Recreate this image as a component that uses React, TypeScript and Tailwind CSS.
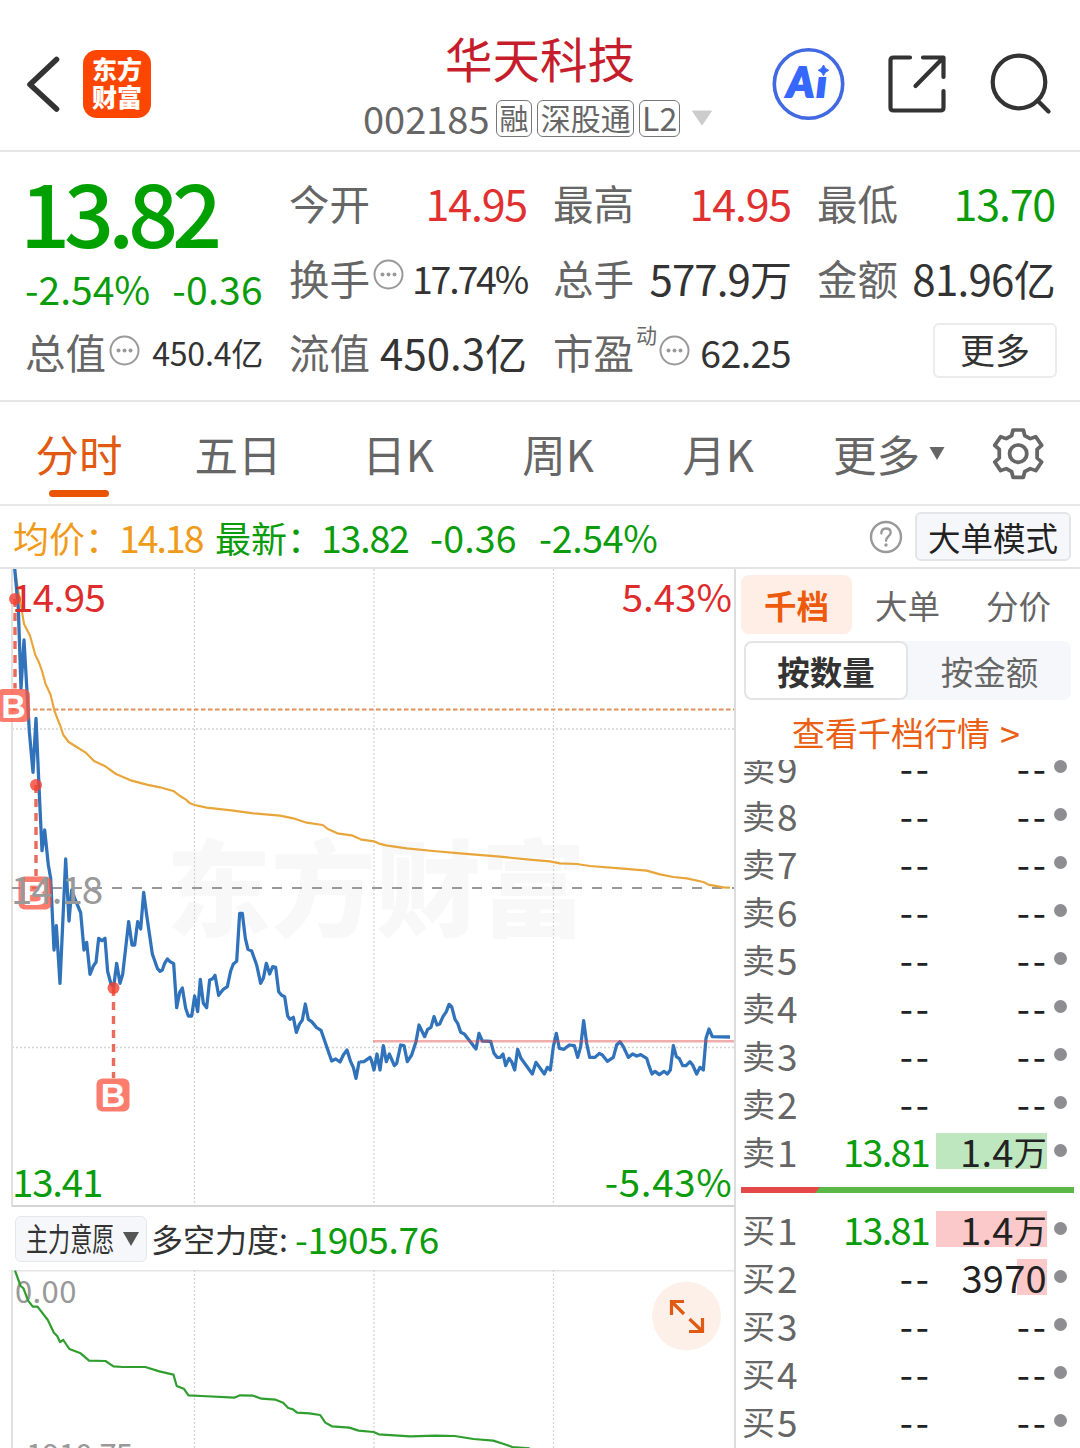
import React from 'react';

const PRICE_OPEN =
    '44,-815 55,-695 63,-455 72,-600 88,-325 99,-203 108,-365 117,-160 126,32 134,-30 145,75 152,115 162,330 169,257 180,430 197,57 207,243 215,150 226,180 242,218 252,330 260,307 270,403 280,378 288,367 296,295 306,302 315,295 323,395 333,432 341,440 350,370 360,430 368,403 386,245 396,315 404,315 413,245 422,267 431,157 440,225 457,342 472,385 480,394 487,390 494,370 502,357 510,365 521,371 530,503 539,457 547,444 557,505 565,528 575,528 584,468 593,515 601,418 610,490 620,503 629,420 638,416 645,406 656,466 670,448 682,440 692,393 700,372 710,364 719,220 727,220 736,295 744,328 755,333 770,375 782,430 790,415 799,370 809,402 818,380 827,382 836,455 845,466 854,470 863,528 870,538 880,532 889,577 898,553 907,540 916,492 925,538 935,545 950,563 963,571 995,663 1007,657 1020,666 1030,645 1041,630 1052,665 1060,682 1068,715 1077,667 1080,666';

const PRICE_CLOSE =
    '0,846 12,845 30,832 34,840 42,870 51,822 60,870 70,797 79,845 88,822 103,857 110,850 122,795 132,797 142,845 155,825 168,785 177,735 194,770 203,748 213,742 222,710 231,735 239,732 249,710 259,695 267,673 275,680 285,718 293,730 302,757 313,762 348,807 357,760 367,783 392,784 402,820 411,832 421,832 429,822 437,857 447,835 455,845 464,870 473,808 483,835 517,882 528,847 553,882 562,862 571,870 580,800 589,760 598,805 612,808 628,795 643,797 653,832 662,800 671,722 680,790 689,832 705,832 718,820 727,825 742,844 760,832 770,795 780,785 790,800 805,832 818,822 830,828 842,824 860,835 868,860 876,882 885,874 898,884 912,874 922,882 931,870 940,797 949,830 958,836 968,857 978,857 990,845 998,855 1010,882 1020,862 1030,870 1038,775 1047,747 1057,770 1110,771';

const AVG_OPEN =
    '44,10 55,80 66,140 72,177 90,212 106,270 116,290 126,318 136,355 152,390 164,440 180,480 190,510 206,531 230,546 256,562 282,588 316,604 348,627 395,647 440,659 480,667 522,679 540,693 558,704 570,715 584,720 620,728 700,737 760,745 840,752 880,760 920,773 968,780 985,793 1012,805 1055,811 1080,822';

const AVG_CLOSE =
    '0,178 42,184 55,190 78,196 140,205 220,213 300,220 420,230 500,238 570,244 600,250 650,252 690,258 780,265 860,272 900,283 940,291 980,295 1030,306 1045,314 1090,322 1110,323';

const FORCE =
    '32,212 44,258 50,265 60,302 70,320 80,320 102,360 115,398 122,408 128,426 135,420 148,447 172,460 190,482 225,483 242,499 262,501 310,501 340,514 370,524 377,558 392,566 402,586 430,588 500,593 512,586 540,587 558,596 588,599 604,608 615,624 625,628 634,638 660,640 683,645 694,668 708,679 745,683 765,692 797,696 808,703 875,709 930,707 970,708 1010,717 1052,722 1075,732 1093,741 1130,745';

const sells = [
    { level: 9 },
    { level: 8 },
    { level: 7 },
    { level: 6 },
    { level: 5 },
    { level: 4 },
    { level: 3 },
    { level: 2 },
    { level: 1, price: '13.81', volume: '1.4万', bar: 111 }
];

const buys = [
    { level: 1, price: '13.81', volume: '1.4万', bar: 111 },
    { level: 2, volume: '3970', bar: 30 },
    { level: 3 },
    { level: 4 },
    { level: 5 }
];

type Level = { level: number; price?: string; volume?: string; bar?: number };

const MoreDots: React.FC = () => (
    <svg width="31" height="31" viewBox="0 0 31 31" className="shrink-0">
        <circle cx="15.5" cy="15.5" r="14" fill="none" stroke="#999" strokeWidth="2" />
        <circle cx="9.5" cy="15.5" r="2" fill="#999" />
        <circle cx="15.5" cy="15.5" r="2" fill="#999" />
        <circle cx="21.5" cy="15.5" r="2" fill="#999" />
    </svg>
);

const LevelRow: React.FC<{ side: string; row: Level; barClass: string }> = ({ side, row, barClass }) => (
    <div className="relative flex h-12 items-center pl-1.5">
        <span className="flex w-[62px] items-center whitespace-nowrap text-[33px] leading-none text-[#666]">
            <span>{side}</span>
            <span className="ml-0.5 text-[37px] leading-none">{row.level}</span>
        </span>
        {row.price ? (
            <span className="w-[125px] text-right text-[38px] leading-none tracking-[-1.8px] text-[#0a9c0a]">{row.price}</span>
        ) : (
            <span className="w-[128px] text-right text-[38px] leading-none tracking-[3px] text-[#222]">--</span>
        )}
        {row.bar && (
            <div className={`absolute right-[33px] top-1.5 h-9 ${barClass}`} style={{ width: row.bar }} />
        )}
        {row.volume ? (
            <span className="relative ml-auto mr-[33px] flex items-center text-[38px] leading-none tracking-[0.3px] text-[#222]">
                {row.volume.replace('万', '')}
                {row.volume.includes('万') && <span className="text-[33px] leading-none">万</span>}
            </span>
        ) : (
            <span className="ml-auto mr-[31px] text-[38px] leading-none tracking-[3px] text-[#222]">--</span>
        )}
        <span className="absolute right-[13px] top-[17px] h-[13px] w-[13px] rounded-full bg-[#8e8d92]" />
    </div>
);

const Marker: React.FC<{ x: number; y: number; boxY: number; cx?: number }> = ({ x, y, boxY, cx = x }) => (
    <g>
        <line x1={x} x2={x} y1={y} y2={boxY - 17} stroke="#ea6a5c" strokeWidth="3.4" strokeDasharray="8 6" />
        <circle cx={x} cy={y} r="6" fill="#f4402f" fillOpacity="0.8" />
        <rect x={cx - 16.5} y={boxY - 16.5} width="33" height="33" rx="6" fill="#fb5340" fillOpacity="0.76" />
        <text x={cx} y={boxY + 12} textAnchor="middle" fill="#fff" fontFamily="Liberation Sans, sans-serif" fontWeight="700" fontSize="34">
            B
        </text>
    </g>
);

const Header: React.FC = () => (
    <header className="flex h-[152px] border-b-2 border-[#e6e6e6]">
        <div className="flex w-[363px] items-start pl-[26px] pt-[50px]">
            <svg width="34" height="68" viewBox="0 0 34 68">
                <path d="M30.500 9.500 4 34.500l26.500 24.500" fill="none" stroke="#333" strokeWidth="5.600" strokeLinecap="round" strokeLinejoin="round" />
            </svg>
            <div className="ml-[23px] flex h-[68px] w-[68px] flex-col items-center justify-center rounded-[14px] bg-[#ff4600] pb-1 text-[25px] font-black leading-[28px] text-white">
                <span>东方</span>
                <span>财富</span>
            </div>
        </div>
        <div className="flex w-[350px] flex-col items-center">
            <h1 className="ml-1 mt-[34px] text-[47.5px] font-normal leading-[48px] text-[#c51d2b]">华天科技</h1>
            <div className="mt-[17px] flex h-[38px] w-full items-center text-[#666]">
                <span className="w-[133px] whitespace-nowrap text-[38px] leading-none">002185</span>
                <span className="flex h-[37px] w-[37px] items-center justify-center rounded-md border border-[#777] pb-0.5 text-[29px] leading-none">融</span>
                <span className="ml-[5px] flex h-[37px] w-[97px] items-center justify-center rounded-md border border-[#777] pb-0.5 text-[30px] leading-none">深股通</span>
                <span className="ml-[5px] flex h-[37px] w-[41px] items-center justify-center rounded-md border border-[#777] pb-0.5 text-[32px] leading-none">L2</span>
                <svg width="22" height="16" viewBox="0 0 22 16" className="ml-[11px]">
                    <path d="M1.5 1h19L11 15z" fill="#ccc" stroke="#ccc" strokeLinejoin="round" />
                </svg>
            </div>
        </div>
        <div className="flex flex-1 items-start pl-[59px] pt-[48px]">
            <svg width="73" height="73" viewBox="0 0 73 73">
                <text x="15" y="49" fill="#3668ff" stroke="#3668ff" strokeWidth="2" fontFamily="Lato, sans-serif" fontWeight="900" fontStyle="italic" fontSize="41" letterSpacing="2.500">
                    Ai
                </text>
                <path d="M44 12h15v17H44z" fill="#fff" />
                <circle cx="36.5" cy="36" r="34.2" fill="none" stroke="#4169e1" strokeWidth="3.6" />
                <path d="M51.500 17q1.400 4.200 5.300 5.300-3.900 1.100-5.300 5.300-1.400-4.200-5.300-5.300 3.900-1.100 5.300-5.300z" fill="#3668ff" stroke="#3668ff" />
            </svg>
            <svg width="60" height="60" viewBox="0 0 60 60" className="ml-[42px] mt-[7px]" fill="none" stroke="#333" strokeWidth="4.200" strokeLinecap="round" strokeLinejoin="round">
                <path d="M23 2.500H6.500q-3 0-3 3v47q0 3 3 3h47q3 0 3-3V36" />
                <path d="M36 2.500h20.500V22M28.500 31 55.500 3.500" />
            </svg>
            <svg width="64" height="64" viewBox="0 0 64 64" className="ml-[43px] mt-[5px]" fill="none" stroke="#333" strokeWidth="4.200" strokeLinecap="round">
                <circle cx="29" cy="29" r="26.300" />
                <path d="m47.500 47.500 11 11" />
            </svg>
        </div>
    </header>
);

const Quote: React.FC = () => (
    <section className="flex h-[250px] justify-between border-b-2 border-[#e6e6e6] pl-[25px] pr-[25px] text-[40.500px] leading-[56px] text-[#666] [&_div]:whitespace-nowrap">
        <div className="w-[238px]">
            <div className="-ml-[5px] mt-[20px] h-[76px] text-[88px] font-medium leading-[76px] tracking-[-6.200px] text-[#00a000]">13.82</div>
            <div className="mt-3 flex h-14 justify-between text-[39px] text-[#0a9c0a]">
                <span>-2.54%</span>
                <span className="tracking-[0.300px]">-0.36</span>
            </div>
            <div className="mt-2 flex h-14 items-center">
                <span>总值</span>
                <span className="mb-1 ml-[3px] flex"><MoreDots /></span>
                <span className="ml-auto text-[32px] tracking-[-0.2px] text-[#333]">450.4亿</span>
            </div>
        </div>
        <div className="w-[238px] pt-[23px]">
            <div className="flex h-14 justify-between">
                <span>今开</span>
                <span className="-mt-px text-[43px] tracking-[-1.2px] text-[#e03030]">14.95</span>
            </div>
            <div className="mt-[19px] flex h-14 items-center">
                <span>换手</span>
                <span className="mb-2 ml-[3px] flex"><MoreDots /></span>
                <span className="-mt-px ml-auto text-[37.5px] tracking-[-2.2px] text-[#333]">17.74%</span>
            </div>
            <div className="mt-[18px] flex h-14 justify-between">
                <span>流值</span>
                <span className="text-[42px] text-[#333]">450.3亿</span>
            </div>
        </div>
        <div className="w-[238px] pt-[23px]">
            <div className="flex h-14 justify-between">
                <span>最高</span>
                <span className="-mt-px text-[43px] tracking-[-1.2px] text-[#e03030]">14.95</span>
            </div>
            <div className="mt-[19px] flex h-14 justify-between">
                <span>总手</span>
                <span className="text-[42px] tracking-[-0.9px] text-[#333]">577.9万</span>
            </div>
            <div className="mt-[18px] flex h-14 items-center">
                <span>市盈</span>
                <span className="mb-9 ml-0.5 text-[21px] leading-none">动</span>
                <span className="mb-1 ml-0.5 flex"><MoreDots /></span>
                <span className="ml-auto text-[37.5px] tracking-[-0.6px] text-[#333]">62.25</span>
            </div>
        </div>
        <div className="w-[238px] pt-[23px]">
            <div className="flex h-14 justify-between">
                <span>最低</span>
                <span className="-mt-px text-[43px] tracking-[-1.2px] text-[#0a9c0a]">13.70</span>
            </div>
            <div className="mt-[19px] flex h-14 justify-between">
                <span>金额</span>
                <span className="text-[42px] tracking-[-0.7px] text-[#333]">81.96亿</span>
            </div>
            <button className="-mr-0.5 ml-auto mt-[17px] block h-[55px] w-[124px] rounded-md border-2 border-[#ececee] pb-1 text-[35px] leading-[47px] text-[#333]">更多</button>
        </div>
    </section>
);

const PeriodTabs: React.FC = () => (
    <nav className="flex h-[104px] items-start border-b-2 border-[#e8e8e8] text-[43.500px] leading-[60px] text-[#666]">
        <div className="flex w-[158px] flex-col items-center pt-[22px] text-[#e05a12]">
            <span>分时</span>
            <span className="mt-1.5 h-[7px] w-[60px] rounded-full bg-[#ea5504]" />
        </div>
        <span className="w-[160px] pt-[22px] text-center">五日</span>
        <span className="w-[160px] pt-[22px] text-center">日K</span>
        <span className="w-[160px] pt-[22px] text-center">周K</span>
        <span className="w-[160px] pt-[22px] text-center">月K</span>
        <span className="ml-[35px] w-[87px] pt-[22px]">更多</span>
        <svg width="16" height="13" viewBox="0 0 16 13" className="ml-[9px] mt-[45px]">
            <path d="M.5 0h15L8 13z" fill="#666" />
        </svg>
        <svg width="54.400" height="53.300" viewBox="0 0 158 160" preserveAspectRatio="none" className="ml-[46px] mt-[25px]" fill="none" stroke="#666" strokeWidth="11" strokeLinejoin="round">
            <path d="M64 9h30l4 17 16 9 16-6 17 26-13 12v26l13 12-17 26-16-6-16 9-4 17H64l-4-17-16-9-16 6-17-26 13-12V67L11 55l17-26 16 6 16-9z" />
            <ellipse cx="79" cy="80" rx="25" ry="26" />
        </svg>
    </nav>
);

const InfoBar: React.FC = () => (
    <div className="flex h-[63px] items-center whitespace-nowrap border-b-2 border-[#e4e4e4] text-[36px] leading-[60px]">
        <div className="flex w-[202px] items-center pl-[13px] text-[#f09a1a]">
            <span className="w-[106px]">均价：</span>
            <span className="text-[37.500px] tracking-[-2px]">14.18</span>
        </div>
        <div className="flex items-center pl-[13px] text-[#0a9c0a]">
            <span className="w-[106px]">最新：</span>
            <span className="w-[109px] text-[37.500px] tracking-[-1.200px]">13.82</span>
            <span className="w-[109px] text-[37.500px] tracking-[0.200px]">-0.36</span>
            <span className="text-[37.500px] tracking-[-0.300px]">-2.54%</span>
        </div>
        <svg width="34" height="34" viewBox="0 0 34 34" className="ml-auto">
            <circle cx="17" cy="17" r="15" fill="none" stroke="#999" strokeWidth="2.400" />
            <path d="M12.300 13.500q0-5 4.700-5t4.700 4.300c0 3.200-4.700 3.700-4.700 8" fill="none" stroke="#999" strokeWidth="2.300" strokeLinecap="round" />
            <circle cx="17" cy="25" r="1.700" fill="#999" />
        </svg>
        <button className="ml-3 mr-[9px] h-[49px] w-[156px] rounded-md border-2 border-[#e2e5ea] bg-[#f6f7fa] text-[32.500px] leading-[43px] text-[#222]">大单模式</button>
    </div>
);

const TrendChart: React.FC = () => (
    <svg width="734" height="638" viewBox="0 569 734 638" className="block">
        <text x="166" y="928" fill="#f8f8f8" fontSize="105" fontWeight="900">东方财富</text>
        <g stroke="#d4d4d4" strokeWidth="1.300" strokeDasharray="2 2">
            <path d="M194.500 569v637M374 569v637M553.500 569v637" />
            <path d="M12 729h722M12 1047.500h722" />
        </g>
        <path d="M12 569v637.500" stroke="#e0e0e0" strokeWidth="2" />
        <path d="M12 1206h722" stroke="#d4d4d4" strokeWidth="2" />
        <path d="M12 888h722" stroke="#999" strokeWidth="2" strokeDasharray="10 10" />
        <path d="M12 709.500h722" stroke="#e0905c" strokeWidth="1.800" strokeDasharray="4.500 2.500" />
        <g fill="none" strokeLinejoin="round">
            <polyline points={AVG_OPEN} transform="translate(0 565) scale(.33333)" stroke="#e8a53a" strokeWidth="6.500" />
            <polyline points={AVG_CLOSE} transform="translate(360 780) scale(.33333)" stroke="#e8a53a" strokeWidth="6.500" />
            <polyline points={PRICE_OPEN} transform="translate(0 840) scale(.33333)" stroke="#3173ba" strokeWidth="9.800" />
            <polyline points={PRICE_CLOSE} transform="translate(360 780) scale(.33333)" stroke="#3173ba" strokeWidth="9.800" />
        </g>
        <path d="M373 1041.300h361" stroke="#e04848" strokeOpacity="0.450" strokeWidth="2.400" />
        <Marker x={15} y={599} boxY={705.5} cx={13.5} />
        <Marker x={36} y={785} boxY={893} cx={35} />
        <Marker x={113.5} y={988} boxY={1095} cx={113} />
        <g fontSize="38.500">
            <text x="12" y="612" fill="#de2b2b" letterSpacing="-0.600">14.95</text>
            <text x="732" y="612" fill="#de2b2b" textAnchor="end">5.43%</text>
            <text x="11" y="904" fill="#999" letterSpacing="-1">14.18</text>
            <text x="12" y="1197" fill="#0a9c0a" letterSpacing="-1.200">13.41</text>
            <text x="732.500" y="1197" fill="#0a9c0a" textAnchor="end" letterSpacing="0.700">-5.43%</text>
        </g>
    </svg>
);

const ForceChart: React.FC = () => (
    <div>
        <div className="flex h-[63px] items-center whitespace-nowrap pl-[15px]">
            <button className="flex h-[46px] w-[132px] items-center rounded-md border border-[#e4e6ec] bg-[#f6f7fa] pl-2.5 text-[#333]">
                <span className="w-[97px] pb-1 text-left">
                    <span className="inline-block w-[128px] origin-left scale-x-[0.690] text-[32px] leading-[40px]">主力意愿</span>
                </span>
                <svg width="16" height="14" viewBox="0 0 16 14">
                    <path d="M0 0h16L8 14z" fill="#555" />
                </svg>
            </button>
            <span className="ml-1 w-[144px] pb-0.5 text-[32px] leading-[42px] text-[#333]">多空力度:</span>
            <span className="pb-0.5 text-[37px] leading-[42px] tracking-[-0.300px] text-[#0a9c0a]">-1905.76</span>
        </div>
        <svg width="734" height="178" viewBox="0 1270 734 178" className="block">
            <path d="M12 1270.500h722" stroke="#e4e4e4" strokeWidth="2" />
            <path d="M12 1270v178" stroke="#e0e0e0" strokeWidth="2" />
            <path d="M194.500 1270v178M374 1270v178M553.500 1270v178" stroke="#d4d4d4" strokeWidth="1.300" strokeDasharray="2 2" />
            <g fill="#999" fontSize="31">
                <text x="15" y="1303" letterSpacing="0.400">0.00</text>
                <text x="16" y="1466" letterSpacing="-0.800">-1910.75</text>
            </g>
            <polyline points={FORCE} transform="translate(0 1200) scale(.46875 .33333)" fill="none" stroke="#2f9e2f" strokeWidth="2.200" strokeLinejoin="round" vectorEffect="non-scaling-stroke" />
            <circle cx="686.500" cy="1316" r="34.500" fill="#fdf0e9" />
            <path d="M684 1301.500h-12.500V1315M672 1302l12 12M689 1331.500h13.500V1318M702 1331l-12.500-12" fill="none" stroke="#e05a12" strokeWidth="3.200" />
        </svg>
    </div>
);

const OrderBook: React.FC = () => (
    <aside className="flex w-[346px] flex-col border-l-2 border-[#ddd]">
        <div className="ml-[5px] mt-1.5 flex h-[59px] text-[32.500px] leading-[60px] text-[#666]">
            <span className="w-[111px] rounded-lg bg-[#feeee6] text-center font-bold text-[#ee5a0c]">千档</span>
            <span className="w-[111px] text-center">大单</span>
            <span className="w-[111px] text-center">分价</span>
        </div>
        <div className="ml-2 mt-[7px] flex h-[59px] w-[327px] rounded-lg bg-[#f6f7fa] text-[32.500px] leading-[56px] text-[#666]">
            <span className="w-[164px] rounded-lg border-2 border-[#e4e4e6] bg-white text-center font-bold text-[#333]">按数量</span>
            <span className="flex-1 pt-0.5 text-center">按金额</span>
        </div>
        <div className="mt-[9px] flex h-[51px] whitespace-nowrap pl-14 text-[33px] leading-[46px] text-[#ea5f14]">
            查看千档行情
            <span className="ml-2.5 text-[36px]">&gt;</span>
        </div>
        <div className="h-[688px] overflow-hidden">
            <div className="-mt-[17px]">
                {sells.map((row) => (
                    <LevelRow key={row.level} side="卖" row={row} barClass="bg-[#bfe7bf]" />
                ))}
            </div>
            <div className="my-3 ml-[5px] mr-1.5 flex h-1.5 bg-[#5bb748]">
                <div className="w-[79px] bg-[#e54848] [clip-path:polygon(0_0,100%_0,74px_100%,0_100%)]" />
            </div>
            {buys.map((row) => (
                <LevelRow key={row.level} side="买" row={row} barClass="bg-[#fbc9c9]" />
            ))}
        </div>
    </aside>
);

const App: React.FC = () => {
    return (
        <main className="h-[1448px] w-[1080px] overflow-hidden bg-white font-['Noto_Sans_CJK_SC',sans-serif]">
            <Header />
            <Quote />
            <PeriodTabs />
            <InfoBar />
            <div className="flex h-[879px]">
                <div className="w-[734px]">
                    <TrendChart />
                    <ForceChart />
                </div>
                <OrderBook />
            </div>
        </main>
    );
};

export default App;
